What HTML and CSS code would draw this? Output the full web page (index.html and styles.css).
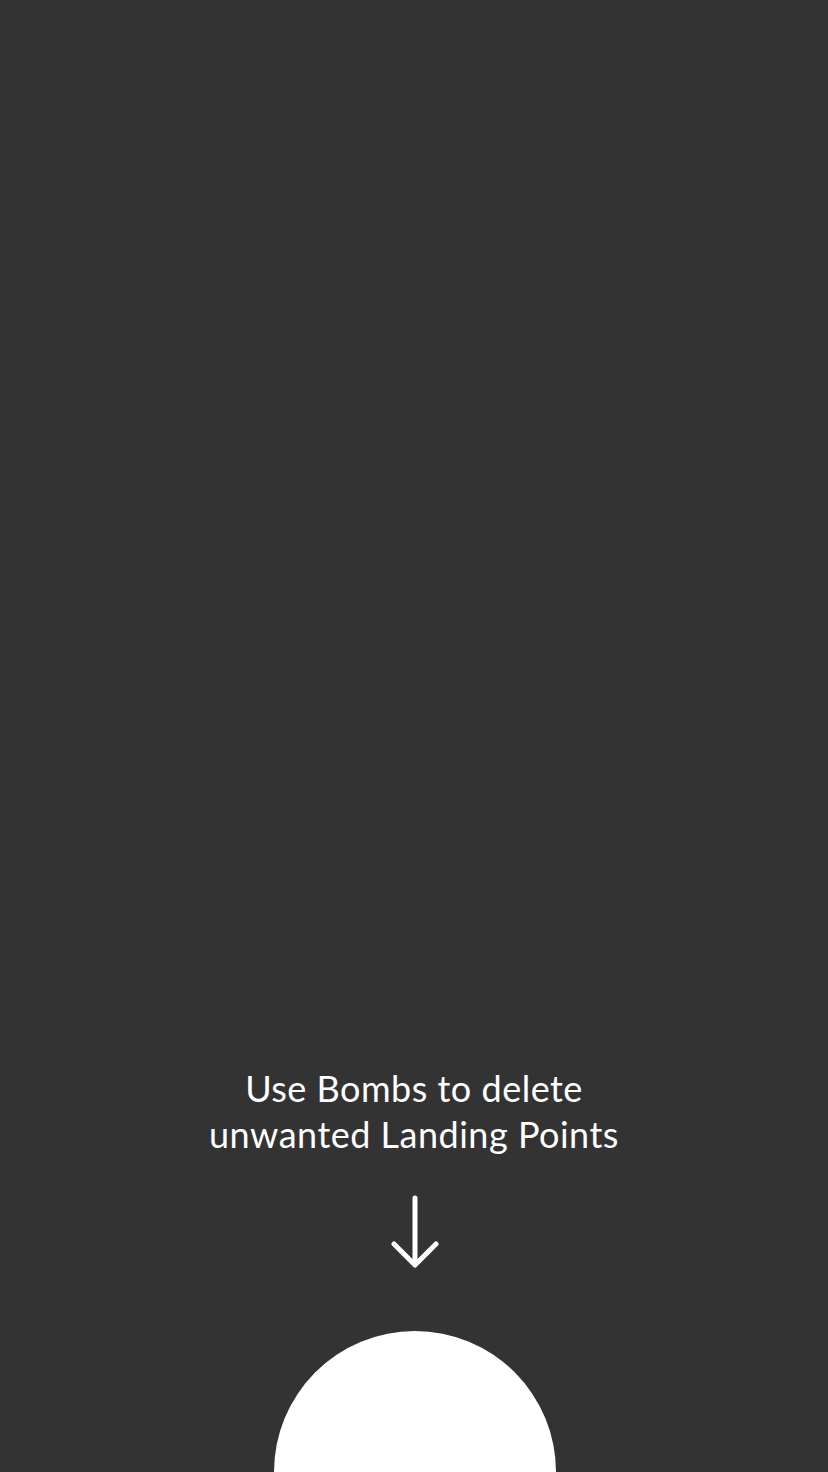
FILE: index.html
```html
<!DOCTYPE html>
<html lang="en">
<head>
<meta charset="utf-8">
<title>Bombs tutorial</title>
<link rel="stylesheet" href="styles.css">
</head>
<body>
<main class="screen">
  <div class="hint">
    <p class="hint-text">Use Bombs to delete<br>unwanted Landing Points</p>
    <svg class="arrow" width="48" height="76" viewBox="0 0 48 76" aria-hidden="true">
      <path d="M24 3 V70 M3 49 L24 70 L45 49" fill="none" stroke="#fff" stroke-width="5" stroke-linecap="round" stroke-linejoin="round"/>
    </svg>
  </div>
  <div class="bomb-button"></div>
</main>
</body>
</html>
```

FILE: styles.css
```css
html, body {
  margin: 0;
  padding: 0;
  background: #333333;
}
.screen {
  width: 828px;
  height: 1472px;
  overflow: hidden;
  display: flex;
  flex-direction: column;
  justify-content: flex-end;
  align-items: center;
  background: #333333;
}
.hint {
  display: flex;
  flex-direction: column;
  align-items: center;
  margin-bottom: 60px;
}
.hint-text {
  margin: 0;
  font-family: Lato, "Open Sans", sans-serif;
  font-weight: 400;
  font-size: 36px;
  line-height: 46px;
  color: #ffffff;
  text-align: center;
  letter-spacing: 0.5px;
}
.arrow {
  display: block;
  margin-top: 38px;
  margin-left: 2px;
}
.bomb-button {
  width: 282px;
  height: 141px;
  border-radius: 141px 141px 0 0;
  background: #ffffff;
  margin-left: 2px;
}
```
